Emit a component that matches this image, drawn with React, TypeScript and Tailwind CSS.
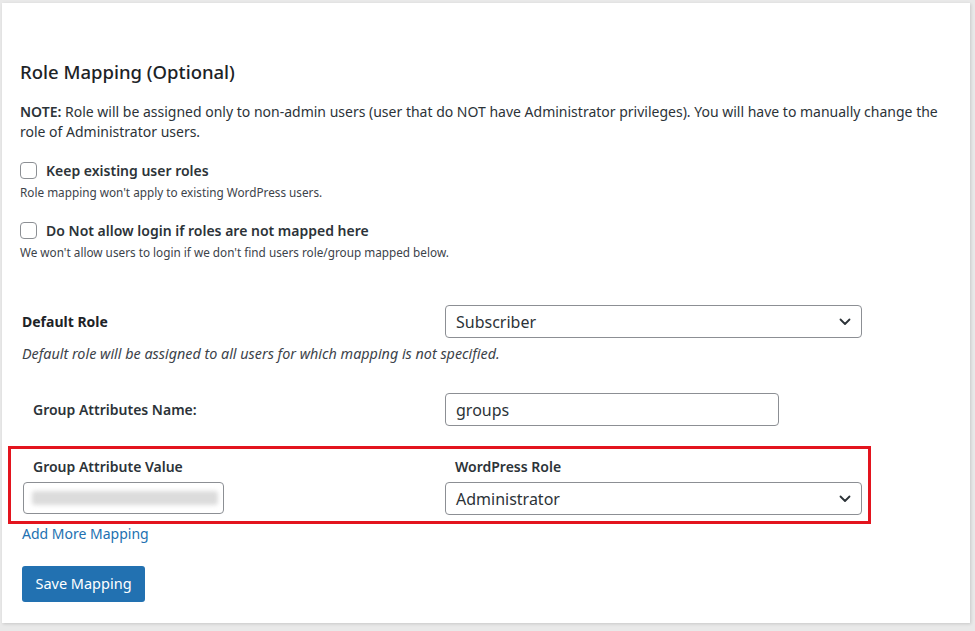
import React, { useState } from "react";

const font = { fontFamily: '"Noto Sans", "Open Sans", Arial, sans-serif' };

type CheckProps = {
  label: string;
  help: string;
};

const CheckOption: React.FC<CheckProps> = ({ label, help }) => {
  const [checked, setChecked] = useState(false);
  return (
    <div>
      <label className="flex items-center h-[20px] gap-[9px] cursor-pointer">
        <span
          onClick={() => setChecked(!checked)}
          className="w-[17px] h-[17px] rounded-[4px] border border-[#8c8f94] bg-white"
        />
        <span className="text-[14px] font-semibold text-[#2c3338]">{label}</span>
      </label>
      <p className="mt-[4px] text-[11.75px] leading-[16px] text-[#3c434a]">{help}</p>
    </div>
  );
};

const Chevron = () => (
  <svg width="12" height="8" viewBox="0 0 12 8" fill="none">
    <path d="M1.5 1.5L6 6L10.5 1.5" stroke="#2c3338" strokeWidth="1.8" strokeLinecap="round" strokeLinejoin="round" />
  </svg>
);

const SelectBox: React.FC<{ value: string }> = ({ value }) => (
  <div className="w-[417px] h-[33px] rounded-[4px] border border-[#8c8f94] bg-white flex items-center justify-between pl-[10px] pr-[10px]">
    <span className="text-[16px] text-[#2c3338]">{value}</span>
    <Chevron />
  </div>
);

export default function App() {
  return (
    <div className="w-[975px] h-[631px] bg-[#e9e9e9] pt-[3px] pl-[2px]" style={font}>
      <div className="w-[968px] h-[620px] bg-white shadow-[1px_1px_3px_rgba(0,0,0,0.15)] pt-[57px] px-[18px] text-[#1d2327]">
        <h2 className="text-[18.5px] leading-[24px] font-medium">Role Mapping (Optional)</h2>

        <p className="mt-[18px] text-[14px] leading-[20px] text-[#2c3338] pr-[8px]">
          <b className="font-semibold">NOTE:</b> Role will be assigned only to non-admin users (user that do NOT have
          Administrator privileges). You will have to manually change the role of Administrator users.
        </p>

        <div className="mt-[18px]">
          <CheckOption label="Keep existing user roles" help="Role mapping won't apply to existing WordPress users." />
        </div>
        <div className="mt-[20px]">
          <CheckOption
            label="Do Not allow login if roles are not mapped here"
            help="We won't allow users to login if we don't find users role/group mapped below."
          />
        </div>

        <div className="mt-[45px] flex items-center">
          <div className="w-[425px] pl-[2px] text-[14px] font-bold text-[#1d2327]">Default Role</div>
          <SelectBox value="Subscriber" />
        </div>
        <p className="mt-[6px] pl-[2px] text-[14.35px] leading-[20px] italic text-[#3c434a]">
          Default role will be assigned to all users for which mapping is not specified.
        </p>

        <div className="mt-[29px] flex items-center">
          <div className="w-[425px] pl-[13px] text-[14px] font-semibold text-[#2c3338]">Group Attributes Name:</div>
          <div className="w-[334px] h-[33px] rounded-[4px] border border-[#8c8f94] flex items-center pl-[10px] text-[16px] text-[#2c3338]">
            groups
          </div>
        </div>

        <div className="mt-[20px] -ml-[12px] w-[863px] border-[3px] border-[#e3141e] pt-[8px] pb-[6px] pl-[12px] pr-[5px] flex">
          <div className="w-[422px] shrink-0">
            <div className="pl-[10px] text-[14px] leading-[20px] font-semibold text-[#2c3338]">Group Attribute Value</div>
            <div className="mt-[5px] w-[201px] h-[32px] rounded-[4px] border border-[#8c8f94] flex items-center pl-[8px]">
              <div className="w-[186px] h-[14px] bg-[#dcdcdc] rounded-[3px] blur-[2px]" />
            </div>
          </div>
          <div>
            <div className="pl-[10px] text-[14px] leading-[20px] font-semibold text-[#2c3338]">WordPress Role</div>
            <div className="mt-[5px]">
              <SelectBox value="Administrator" />
            </div>
          </div>
        </div>

        <a href="#" className="block pl-[2px] text-[14px] leading-[19px] text-[#2271b1]">
          Add More Mapping
        </a>

        <button className="mt-[23px] ml-[2px] w-[123px] h-[36px] rounded-[3px] bg-[#2271b1] text-white text-[14.5px]">
          Save Mapping
        </button>
      </div>
    </div>
  );
}
